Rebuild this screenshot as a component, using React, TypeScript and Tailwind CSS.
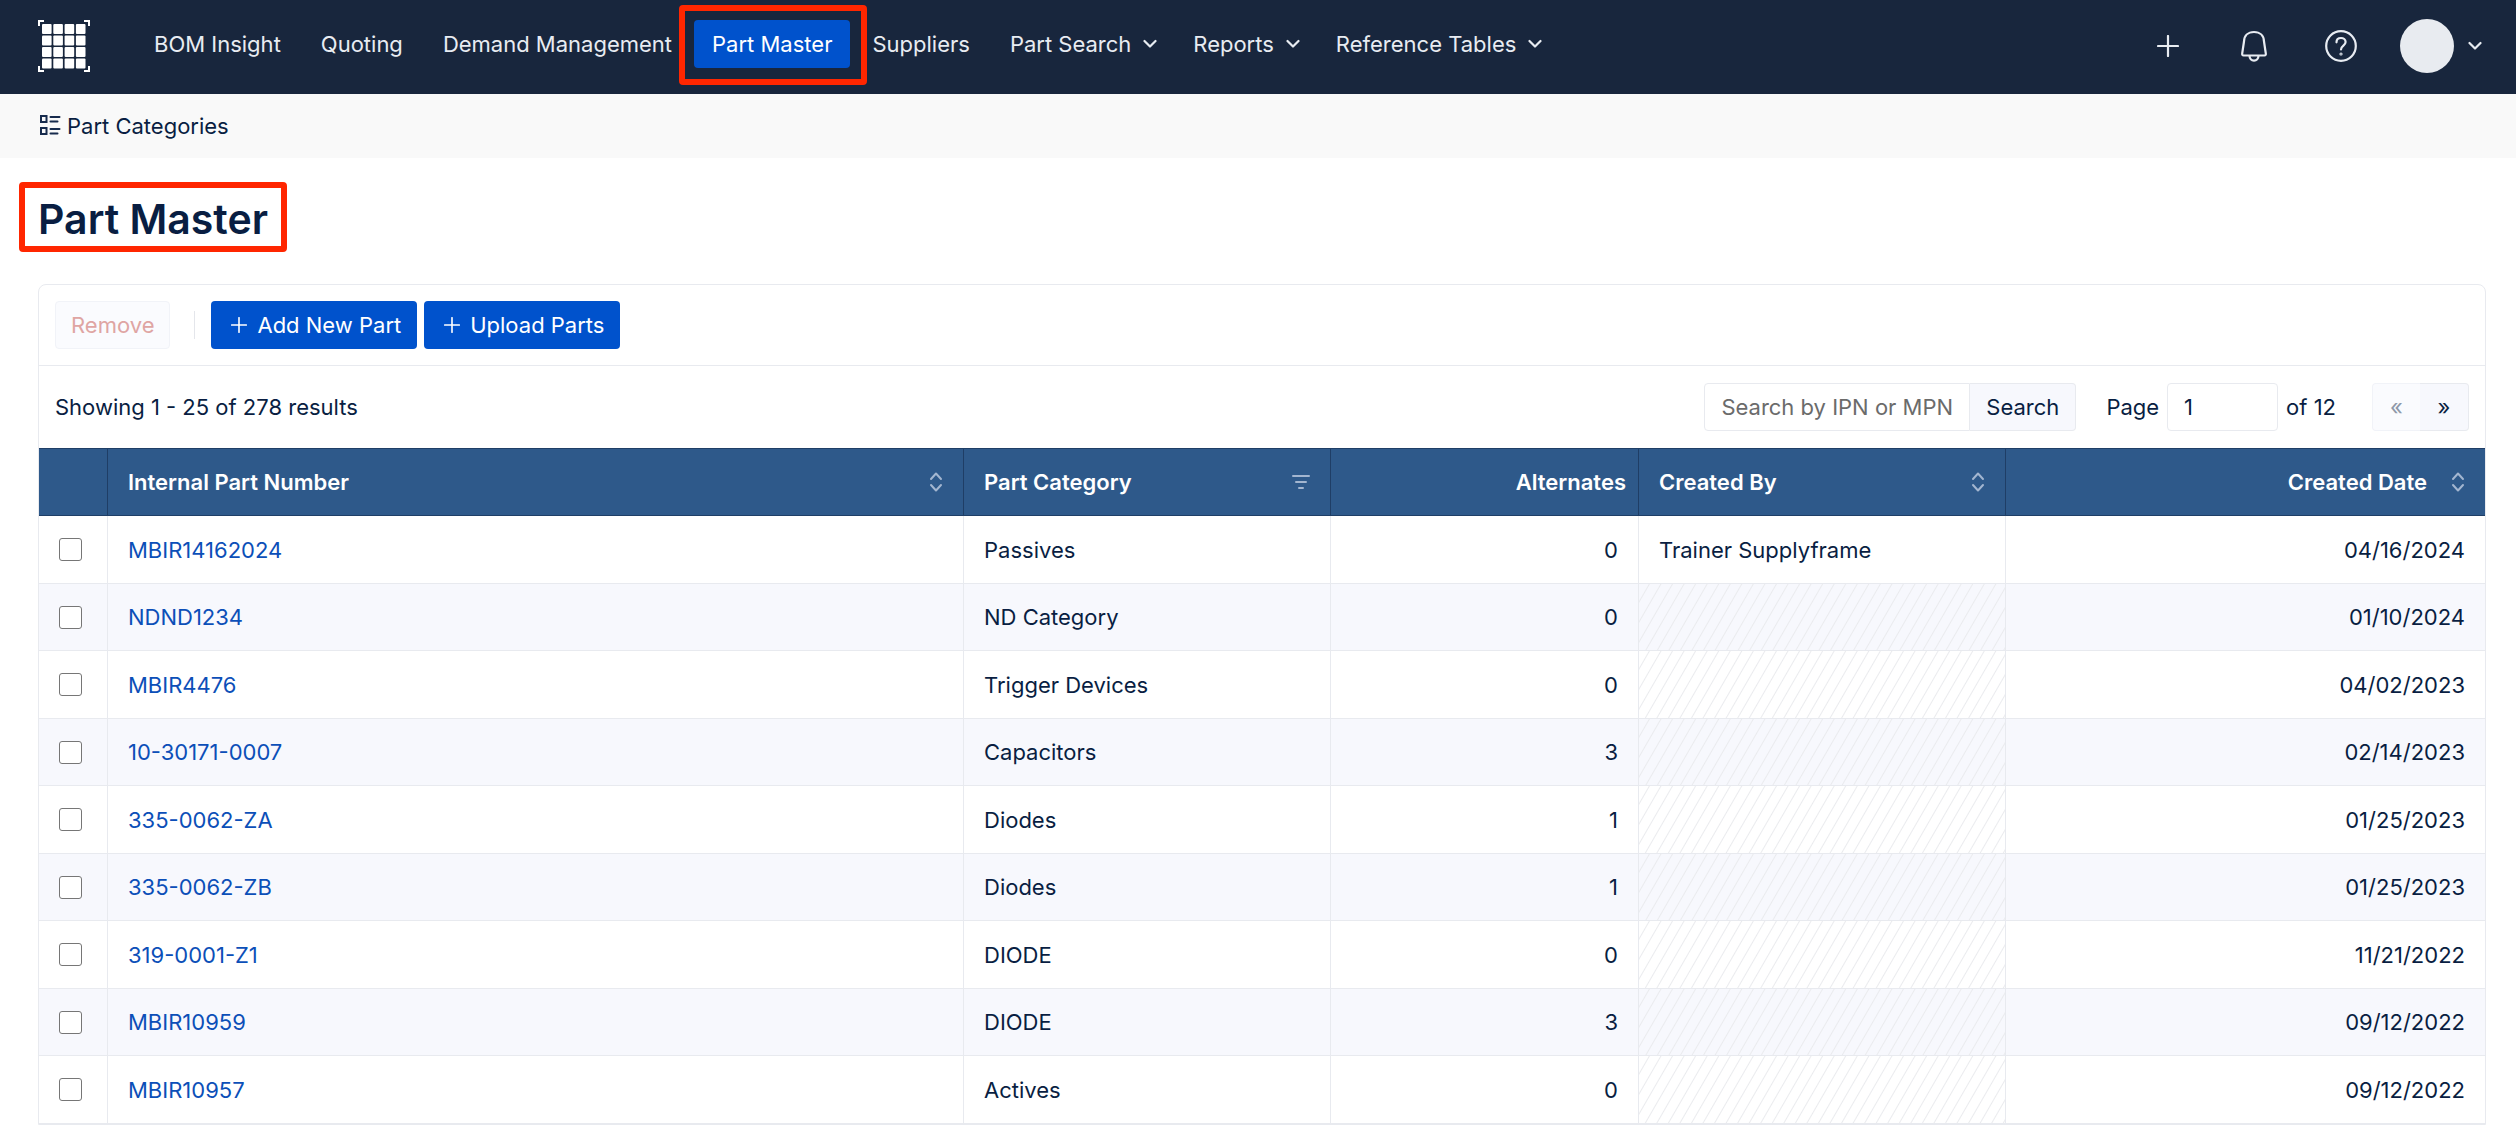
import { ReactNode } from 'react'

interface NavItem {
  label: string
  menu?: boolean
}

interface Part {
  ipn: string
  category: string
  alternates: number
  createdBy?: string
  date: string
}

const navBefore: NavItem[] = [
  { label: 'BOM Insight' },
  { label: 'Quoting' },
  { label: 'Demand Management' },
]

const navAfter: NavItem[] = [
  { label: 'Suppliers' },
  { label: 'Part Search', menu: true },
  { label: 'Reports', menu: true },
  { label: 'Reference Tables', menu: true },
]

const parts: Part[] = [
  { ipn: 'MBIR14162024', category: 'Passives', alternates: 0, createdBy: 'Trainer Supplyframe', date: '04/16/2024' },
  { ipn: 'NDND1234', category: 'ND Category', alternates: 0, date: '01/10/2024' },
  { ipn: 'MBIR4476', category: 'Trigger Devices', alternates: 0, date: '04/02/2023' },
  { ipn: '10-30171-0007', category: 'Capacitors', alternates: 3, date: '02/14/2023' },
  { ipn: '335-0062-ZA', category: 'Diodes', alternates: 1, date: '01/25/2023' },
  { ipn: '335-0062-ZB', category: 'Diodes', alternates: 1, date: '01/25/2023' },
  { ipn: '319-0001-Z1', category: 'DIODE', alternates: 0, date: '11/21/2022' },
  { ipn: 'MBIR10959', category: 'DIODE', alternates: 3, date: '09/12/2022' },
  { ipn: 'MBIR10957', category: 'Actives', alternates: 0, date: '09/12/2022' },
]

function Logo() {
  const cells = [0, 1, 2, 3]
  return (
    <svg width="52" height="52" viewBox="0 0 52 52" fill="none">
      {cells.map((row) =>
        cells.map((col) => (
          <rect
            key={`${row}-${col}`}
            x={4 + col * 11.3}
            y={4 + row * 11.5}
            width="9.6"
            height="10"
            rx="1"
            fill="#fff"
          />
        ))
      )}
      <path d="M1 6V1h5M46 1h5v5M1 46v5h5M46 51h5v-5" stroke="#fff" strokeWidth="2" />
    </svg>
  )
}

function Chevron() {
  return (
    <svg width="14" height="10" viewBox="1 0 14 10" fill="none">
      <path d="M2.500 2l5.500 5.500L13.500 2" stroke="#e8ecf2" strokeWidth="2.2" strokeLinecap="round" strokeLinejoin="round" />
    </svg>
  )
}

function PlusIcon({ size }: { size: number }) {
  return (
    <svg width={size} height={size} viewBox="0 0 22 22" fill="none">
      <path d="M11 1v20M1 11h20" stroke="currentColor" strokeWidth="2.2" strokeLinecap="round" />
    </svg>
  )
}

function BellIcon() {
  return (
    <svg width="28" height="34" viewBox="0 0 28 34" fill="none" stroke="currentColor" strokeWidth="2.2" strokeLinejoin="round">
      <path d="M14 3C8 3 4.200 6.800 4 12.500L2.200 24.500Q2 26.500 3.500 26.500h21q1.500 0 1.300-2L24 12.500C23.800 6.800 20 3 14 3z" />
      <path d="M9.500 26.500c0 3.200 2 5.200 4.500 5.200s4.500-2 4.500-5.200" />
    </svg>
  )
}

function HelpIcon() {
  return (
    <svg width="32" height="32" viewBox="0 0 32 32" fill="none" stroke="currentColor" strokeWidth="2.2" strokeLinecap="round">
      <circle cx="16" cy="16" r="14.800" />
      <path d="M11.500 12.300c0-2.700 2-4.300 4.500-4.300s4.600 1.700 4.600 4c0 3.600-4.600 3.500-4.600 7.500" />
      <circle cx="16" cy="24" r=".5" />
    </svg>
  )
}

function CategoriesIcon() {
  return (
    <svg width="21" height="22" viewBox="0 0 21 22" fill="none" stroke="#172b4d" strokeWidth="2">
      <rect x="1" y="1" width="5.500" height="6" />
      <rect x="1" y="13" width="5.500" height="6" />
      <path d="M10.500 2h9M10.500 6.500h7M10.500 14h9M10.500 18.500h7" strokeLinecap="round" />
    </svg>
  )
}

function SortIcon() {
  return (
    <svg className="shrink-0" width="14" height="20" viewBox="0 0 14 20" fill="none" stroke="#a3b6d0" strokeWidth="2" strokeLinecap="round" strokeLinejoin="round">
      <path d="M2 7l5-5.500L12 7M2 13l5 5.500L12 13" />
    </svg>
  )
}

function FilterIcon() {
  return (
    <svg className="shrink-0" width="18" height="16" viewBox="0 0 18 16" fill="none" stroke="#a3b6d0" strokeWidth="2" strokeLinecap="round">
      <path d="M1 2h16M4 8h10M7 14h4" />
    </svg>
  )
}

function NavLink({ label, menu }: NavItem) {
  return (
    <a href="#" className={`flex items-center gap-3 whitespace-nowrap ${menu ? '-mr-1' : ''}`}>
      {label}
      {menu && <Chevron />}
    </a>
  )
}

function HeadCell({ children, last }: { children?: ReactNode; last?: boolean }) {
  return (
    <th
      scope="col"
      className={`border-y border-[#1f3e66] px-5 text-left font-semibold ${last ? '' : 'border-r'}`}
    >
      {children}
    </th>
  )
}

export default function App() {
  return (
    <div className="bg-white font-[Inter,'Liberation_Sans',sans-serif] text-[22px] leading-8 text-[#091e42]">
      {/* Top bar */}
      <header className="flex h-[94px] items-center bg-[#18263d] pl-[38px] pr-[34px] text-[#e8ecf2]">
        <a href="#" aria-label="Home" className="-mt-0.5">
          <Logo />
        </a>
        <nav className="ml-16 flex items-center gap-10 pb-1.5">
          {navBefore.map((item) => (
            <NavLink key={item.label} {...item} />
          ))}
          <div className="relative -mx-[18px]">
            <a
              href="#"
              aria-current="page"
              className="flex h-12 items-center whitespace-nowrap rounded-[4px] bg-[#0052cc] px-[18px] text-white"
            >
              Part Master
            </a>
            <div className="pointer-events-none absolute -bottom-[17px] -left-[15px] -right-[17px] -top-[15px] rounded-[4px] border-6 border-[#ff2600]" />
          </div>
          {navAfter.map((item) => (
            <NavLink key={item.label} {...item} />
          ))}
        </nav>
        <div className="ml-auto flex items-center pb-0.5">
          <button aria-label="Create">
            <PlusIcon size={22} />
          </button>
          <button aria-label="Notifications" className="ml-[61px]">
            <BellIcon />
          </button>
          <button aria-label="Help" className="ml-[57px]">
            <HelpIcon />
          </button>
          <button aria-label="Account" className="ml-[43px] flex items-center gap-[14px]">
            <span className="size-[54px] rounded-full bg-[#e8ebf0]" />
            <Chevron />
          </button>
        </div>
      </header>

      {/* Sub navigation */}
      <div className="flex h-16 items-center bg-[#f9f9f9] px-10">
        <a href="#" className="flex items-center gap-[6px]">
          <CategoriesIcon />
          Part Categories
        </a>
      </div>

      <main className="pl-[38px] pr-[30px] pt-6">
        <div className="-ml-[19px] inline-flex h-[70px] items-center rounded-[4px] border-6 border-[#ff2600] px-[13px] pt-1">
          <h1 className="text-[41px] font-semibold leading-[52px]">Part Master</h1>
        </div>

        <section className="mt-8 rounded-t-lg border border-[#e8eaef]">
          {/* Toolbar */}
          <div className="flex h-[81px] items-center border-b border-[#e8eaef] px-4">
            <button
              disabled
              className="h-12 rounded-[4px] border border-[#f1f3f8] bg-[#fafbfe] px-[15px] text-[#dfa5a3]"
            >
              Remove
            </button>
            <div className="ml-6 mr-4 h-7 w-px bg-[#e4e6eb]" />
            <button className="flex h-12 items-center gap-[10px] rounded-[4px] bg-[#0052cc] pl-5 pr-4 text-white">
              <PlusIcon size={16} />
              Add New Part
            </button>
            <button className="ml-[7px] flex h-12 items-center gap-[10px] rounded-[4px] bg-[#0052cc] pl-5 pr-4 text-white">
              <PlusIcon size={16} />
              Upload Parts
            </button>
          </div>

          {/* Results bar */}
          <div className="flex h-[82px] items-center px-4">
            <p>Showing 1 - 25 of 278 results</p>
            <div className="ml-auto flex h-12">
              <input
                type="text"
                aria-label="Search by IPN or MPN"
                placeholder="Search by IPN or MPN"
                className="w-[266px] rounded-l-[4px] border border-[#e8eaef] px-4 placeholder:text-[#6b6b6b]"
              />
              <button className="w-[106px] rounded-r-[4px] border border-l-0 border-[#e8eaef] bg-[#f7f8fd]">
                Search
              </button>
            </div>
            <label htmlFor="page" className="ml-[30px]">
              Page
            </label>
            <input
              id="page"
              type="text"
              defaultValue="1"
              className="mx-2 h-12 w-[111px] rounded-[4px] border border-[#e8eaef] px-4"
            />
            <span>of 12</span>
            <div className="ml-9 flex h-12">
              <button
                disabled
                aria-label="Previous page"
                className="w-12 rounded-l-[4px] border border-r-0 border-[#f1f3f8] bg-[#fafbfe] text-[#8e98a9]"
              >
                «
              </button>
              <button
                aria-label="Next page"
                className="w-[49px] rounded-r-[4px] border border-l-0 border-[#e8eaef] bg-[#f7f8fd]"
              >
                »
              </button>
            </div>
          </div>

          <table className="w-full table-fixed border-separate border-spacing-0">
            <colgroup>
              <col className="w-[69px]" />
              <col />
              <col className="w-[367px]" />
              <col className="w-[308px]" />
              <col className="w-[367px]" />
              <col className="w-[479px]" />
            </colgroup>
            <thead>
              <tr className="h-[68px] bg-[#2e598a] text-white">
                <HeadCell />
                <HeadCell>
                  <div className="flex items-center justify-between">
                    Internal Part Number
                    <SortIcon />
                  </div>
                </HeadCell>
                <HeadCell>
                  <div className="flex items-center justify-between">
                    Part Category
                    <FilterIcon />
                  </div>
                </HeadCell>
                <HeadCell>
                  <div className="-mr-2 text-right">Alternates</div>
                </HeadCell>
                <HeadCell>
                  <div className="flex items-center justify-between">
                    Created By
                    <SortIcon />
                  </div>
                </HeadCell>
                <HeadCell last>
                  <div className="flex items-center justify-end gap-6">
                    Created Date
                    <SortIcon />
                  </div>
                </HeadCell>
              </tr>
            </thead>
            <tbody className="[&_td]:border-b [&_td]:border-[#e8eaef] [&_td]:px-5 [&_td:not(:last-child)]:border-r">
              {parts.map((part) => (
                <tr key={part.ipn} className="h-[68px] even:h-[67px] even:bg-[#f7f8fd]">
                  <td>
                    <input
                      type="checkbox"
                      aria-label={`Select ${part.ipn}`}
                      className="block size-[23px] appearance-none rounded-[3px] border border-[#767676] bg-white"
                    />
                  </td>
                  <td>
                    <a href="#" className="text-[#0c4fb8]">
                      {part.ipn}
                    </a>
                  </td>
                  <td>{part.category}</td>
                  <td className="text-right">{part.alternates}</td>
                  {part.createdBy ? (
                    <td>{part.createdBy}</td>
                  ) : (
                    <td className="bg-[repeating-linear-gradient(120deg,transparent_0px,transparent_8px,#eaebee_9px,transparent_10px)]" />
                  )}
                  <td className="text-right">{part.date}</td>
                </tr>
              ))}
            </tbody>
          </table>
        </section>
      </main>
    </div>
  )
}
